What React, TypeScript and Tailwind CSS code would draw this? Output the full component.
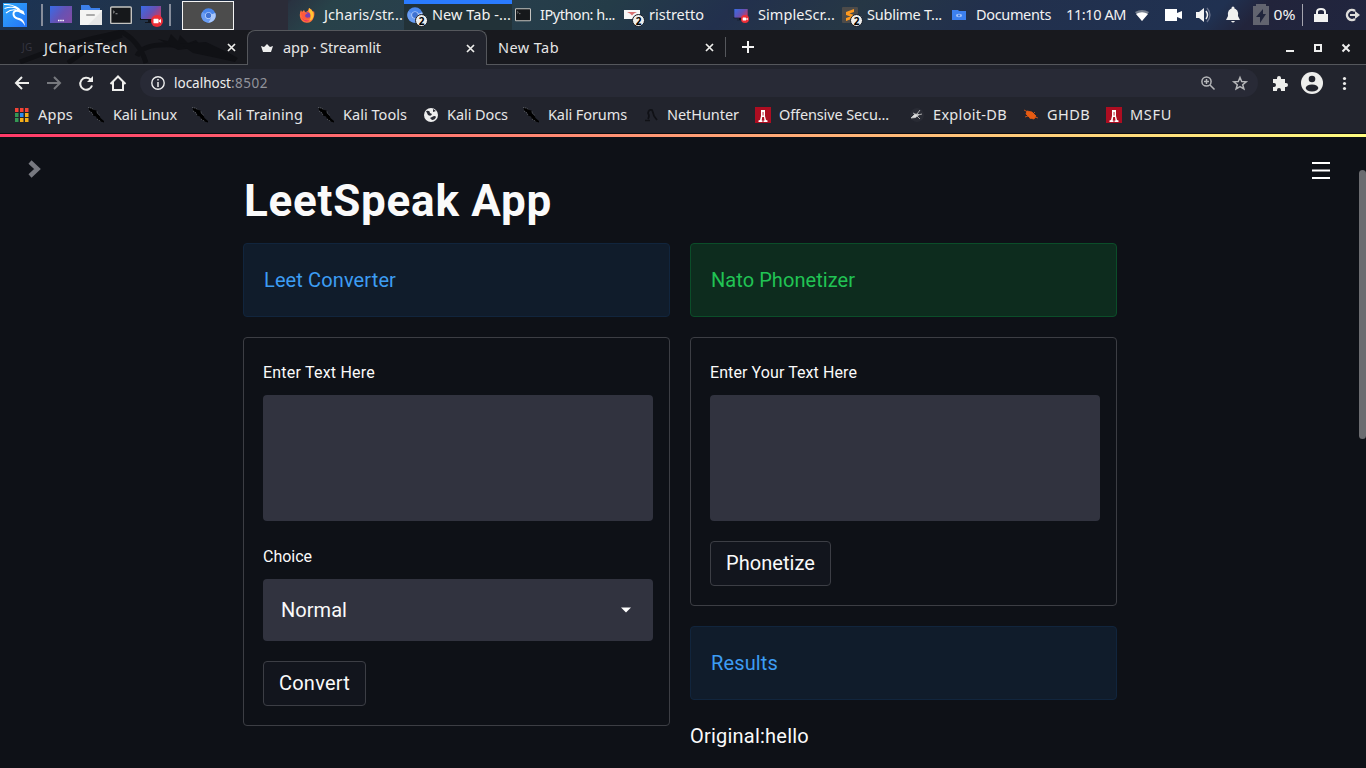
import React, { useLayoutEffect, useRef, useState } from "react";

function Fit({ w, children, className = "" }: { w: number; children: string; className?: string }) {
  const ref = useRef<HTMLSpanElement>(null);
  const [ls, setLs] = useState(0);
  useLayoutEffect(() => {
    if (ref.current) {
      const natural = ref.current.getBoundingClientRect().width;
      setLs((w - natural) / children.length);
    }
  }, []);
  return (
    <span className={"flex shrink-0 whitespace-nowrap " + className} style={{ width: w }}>
      <span ref={ref} className="whitespace-nowrap" style={{ letterSpacing: ls }}>{children}</span>
    </span>
  );
}

function KaliLogo() {
  return (
    <svg width="24" height="24" viewBox="0 0 24 24">
      <defs><linearGradient id="kl" x1="0" y1="0" x2="1" y2="1"><stop offset="0" stopColor="#2fa8f8" /><stop offset="1" stopColor="#2474fb" /></linearGradient></defs>
      <rect width="24" height="24" fill="url(#kl)" />
      <path d="M1 1.500Q9 1 14 5M1.500 5.500Q8 3 14 5.500M3 10Q8 6 13 7" fill="none" stroke="#fff" strokeWidth="1.100" />
      <path d="M11 3Q16 4 17 6.500L20.500 8 22 12 18.500 10.500 15.500 9Q11 8 11.500 11.500Q12 14 16.500 15Q21.500 16.500 22 23Q19.500 18 15.500 17Q9.500 15.500 9.500 11Q9.500 7 14 6.500z" fill="#fff" />
    </svg>
  );
}

function Monitor({ rec = false, w = 24 }: { rec?: boolean; w?: number }) {
  return (
    <svg width={w} height={w} viewBox="0 0 24 24" className="shrink-0">
      <defs><linearGradient id={rec ? "mr" : "md"} x1="0" y1="0" x2="1" y2=".6"><stop offset="0" stopColor="#386ce8" /><stop offset=".6" stopColor="#6652b4" /><stop offset="1" stopColor={rec ? "#bd3c6e" : "#7a4da8"} /></linearGradient></defs>
      {rec ? (
        <>
          <path d="M1 15h22v2h-8v2h3v1H6v-1h3v-2H1z" fill="#12141b" />
          <rect x="2" y="3" width="20" height="13" fill="url(#mr)" />
          <circle cx="18" cy="18" r="6" fill="#ed2e37" />
          <rect x="14.500" y="15.800" width="5" height="4.500" rx=".6" fill="#fff" /><path d="M19 18l3-2v4z" fill="#fff" />
        </>
      ) : (
        <><rect x="1" y="3" width="22" height="17" fill="url(#md)" /><path d="M9 17.500h6" stroke="#fff" strokeWidth="1.500" strokeDasharray="1.500 .7" /></>
      )}
    </svg>
  );
}

function Terminal({ w }: { w: number }) {
  return (
    <svg width={w} height={w * 0.84} viewBox="0 0 22 18" className="shrink-0">
      <rect x=".7" y=".7" width="20.600" height="16.600" rx="1" fill="#16181b" stroke="#c4c3c0" strokeWidth="1.400" />
      <path d="M3 4.500l1.500 1.200L3 7M5.500 7.500h2" fill="none" stroke="#aaa" strokeWidth=".9" />
    </svg>
  );
}

function Chromium({ w }: { w: number }) {
  return (
    <svg width={w} height={w} viewBox="0 0 16 16" className="shrink-0">
      <circle cx="8" cy="8" r="7.700" fill="#4b87ec" />
      <path d="M8 8L15.200 5.300A7.700 7.700 0 0 1 7.500 15.700L11 10z" fill="#a9c7fb" />
      <path d="M8 8L1.300 4.300A7.700 7.700 0 0 0 7.500 15.700L11 9.500z" fill="#6a9df3" />
      <circle cx="8" cy="8" r="3.600" fill="#c9dcff" /><circle cx="8" cy="8" r="2.900" fill="#3f72d2" />
    </svg>
  );
}

function Firefox() {
  return (
    <svg width="16" height="16" viewBox="0 0 16 16">
      <path d="M10 1q3 1 4 4l1-1q1 4-.5 7A7 7 0 0 1 1 10Q.3 6 2 3l1 2 2-2 1 2q3 0 4-4z" fill="#ff7139" />
      <path d="M10 1q5 3 4.500 8A6 6 0 0 1 10 14q3-4 1-8-2-2-1-5z" fill="#ffc533" />
      <circle cx="8" cy="8.500" r="3.200" fill="#7542b5" /><path d="M2 5q3 1 7 1Q6 7 6 9q1 3 5 1-2 4-6 2Q2 10 2 5" fill="#ff593c" />
      <path d="M2 10q4 5 10 3-6 4-10-3" fill="#ee2967" />
    </svg>
  );
}

function Badge() {
  return (
    <span className="absolute left-[8px] top-[7px] flex h-[13px] w-[13px] items-center justify-center rounded-full border border-[#161b26] bg-[#eeeeec] font-['Noto_Sans'] text-[10px] font-bold leading-none text-black">2</span>
  );
}

function Task({ icon, badge = false, label, tw, className }: { icon: React.ReactNode; badge?: boolean; label: string; tw: number; className: string }) {
  return (
    <div className={"flex h-[30px] shrink-0 items-center gap-[9px] " + className}>
      <span className="relative flex h-4 w-4 shrink-0 items-center justify-center">{icon}{badge && <Badge />}</span>
      <Fit w={tw}>{label}</Fit>
    </div>
  );
}

function Close() {
  return <svg width="9" height="9" viewBox="0 0 9 9" className="shrink-0"><path d="M1 1l7 7M8 1L1 8" stroke="#eeeeec" strokeWidth="1.700" /></svg>;
}

function KaliMark() {
  return (
    <svg width="18" height="18" viewBox="0 0 18 18" className="shrink-0 -translate-x-[2px]">
      <path d="M1.500 2l3.500.5 2 1.500 2.500.5.500 3 2.500 2 1 2.500 3.500 3v1.500l-3.500-1-3.500-2.500-1-2.500-3-1L5 6.500 2.500 5z" fill="#000" />
      <path d="M1 1.500l3.500.5 2 1.500M2 5l3 2 1 2.500M10 5.500l.5 2 2.500 2M10 13l4 2.500" fill="none" stroke="#65676c" strokeWidth=".8" strokeDasharray="1.200 1" />
    </svg>
  );
}

function RedMark() {
  return (
    <svg width="16" height="16" viewBox="0 0 16 16" className="shrink-0">
      <rect width="16" height="16" fill="#ad0d21" />
      <path d="M6 3h4v6l1 4 1.500.5V15h-4v-1.500H9.500L9 10H7.200L6.700 13.500h.8V15H3.500v-1.500l1.500-.5L6 9z" fill="#fff" />
      <path d="M7.600 5h.9v3.500h-.9z" fill="#ad0d21" />
    </svg>
  );
}

function Mark({ icon, label, tw, className }: { icon: React.ReactNode; label: string; tw: number; className: string }) {
  return <div className={"flex shrink-0 items-center " + className}><span className="flex w-[18px] shrink-0 justify-start">{icon}</span><Fit w={tw} className="ml-[6px]">{label}</Fit></div>;
}

function TaskBar() {
  return (
    <header className="flex h-[30px] w-full shrink-0 items-center overflow-hidden bg-[linear-gradient(135deg,#1b3354_0%,#22344a_12%,#1c2a43_18%,#242532_20%,#293341_21%,#284249_24%,#293f4d_32%,#243c48_44%,#22304d_53%,#263745_62%,#22304c_71%,#203151_88%,#22243b_91%,#20253f_100%)] text-[14.500px] text-[#f2f2f2]">
      <div className="flex w-[42px] shrink-0 pl-[3px]"><KaliLogo /></div>
      <div className="-ml-px h-[22px] w-[2px] shrink-0 bg-[#868d9b]" />
      <div className="ml-[6px] flex w-[24px] shrink-0 justify-center"><Monitor /></div>
      <div className="ml-[6px] shrink-0">
        <svg width="24" height="22" viewBox="0 0 24 22" className="block"><path d="M2 1h8l2 3h9v6H2z" fill="#3c80ea" /><path d="M1 6h22v15H1z" fill="#f4f4f3" /><path d="M23 7v14H9z" fill="#e6e6e6" /><rect x="7" y="10" width="9" height="2" rx="1" fill="#aaa" /></svg>
      </div>
      <div className="ml-[7px] shrink-0"><Terminal w={22} /></div>
      <div className="ml-[7px] w-[24px] shrink-0"><Monitor rec /></div>
      <div className="ml-[6px] h-[22px] w-[2px] shrink-0 bg-[#868d9b]" />
      <div className="ml-[11px] flex h-[29px] w-[52px] shrink-0 items-center justify-center border border-[#f4f4f4] bg-[#4c4c4c]"><Chromium w={15} /></div>
      <div className="h-[30px] w-[54px] shrink-0 bg-[#2b2c38]" />
      <Task icon={<Firefox />} label="Jcharis/str..." tw={79} className="w-[116px] pl-[11px]" />
      <Task icon={<Chromium w={16} />} badge label="New Tab -..." tw={79} className="w-[108px] border-t-4 border-[#2a7bff] bg-[#223238] pb-1 pl-[3px]" />
      <Task icon={<Terminal w={16} />} label="IPython: h..." tw={75} className="w-[108px] pl-[3px]" />
      <Task icon={<svg width="16" height="14" viewBox="0 0 16 14"><path d="M0 2h16v9H0z" fill="#f7f7f7" /><path d="M3 4h10l-3 1.500-2 2-2-2z" fill="#d87070" /></svg>} badge label="ristretto" tw={55} className="w-[108px] pl-[4px]" />
      <Task icon={<Monitor rec w={16} />} label="SimpleScr..." tw={77} className="w-[110px] pl-[5px]" />
      <Task icon={<svg width="16" height="16" viewBox="0 0 16 16"><rect width="16" height="16" rx="1" fill="#4d4b49" /><path d="M12 2v3L7.500 6.600 12 8v3l-8 3v-3l4.500-1.500L4 8V5z" fill="#ff9a1f" /></svg>} badge label="Sublime T..." tw={75} className="w-[110px] pl-[4px]" />
      <Task icon={<svg width="15" height="12" viewBox="0 0 15 12"><path d="M0 1h6l1 1h7v9H0z" fill="#3c80ef" /><ellipse cx="7" cy="6.500" rx="3" ry="1.700" fill="#9fc0fa" /><circle cx="7" cy="6.500" r="1" fill="#3674dc" /></svg>} label="Documents" tw={75} className="w-[117px] pl-[3px]" />
      <Fit w={60} className="ml-px">11:10 AM</Fit>
      <svg width="240" height="30" viewBox="1126 0 240 30" className="shrink-0">
        <path d="M1135 12q7-4 14 0l-7 9z" fill="#77808f" /><path d="M1136 14q6-3.500 12 0l-6 7z" fill="#fff" />
        <path d="M1165 9h12v4l5-2v8l-5-2v4h-12z" fill="#fff" />
        <path d="M1196 12h3l5-4v14l-5-4h-3z" fill="#f4f4f4" /><path d="M1206 11q3 4 0 8" stroke="#eee" strokeWidth="1.500" fill="none" /><path d="M1207 8q6 7 0 14" stroke="#68718b" strokeWidth="1.300" fill="none" />
        <path d="M1226 20l2-4q-1-7 5-8 6 1 5 8l2 4zM1231 21h4q-2 3-4 0" fill="#f0f0ef" /><circle cx="1233" cy="8" r="1.500" fill="#f0f0ef" />
        <path d="M1253 6h3V4h10v2h3v19h-16z" fill="#62646f" /><path d="M1263 9l-7 8h4v6l6-9h-3z" fill="#20253c" />
        <text x="1273.500" y="20" textLength="22" lengthAdjust="spacingAndGlyphs" fill="#f4f4f4">0%</text>
        <path d="M1302.500 4v22" stroke="#a5a5af" />
        <path d="M1314 14h14v8h-14z" fill="#f2f2f1" /><path d="M1317 15v-3q0-3 4-3t4 3v3" fill="none" stroke="#f2f2f1" strokeWidth="2" />
        <path d="M1355 11a5 5 0 1 0 0 8" fill="none" stroke="#deddda" strokeWidth="2.500" /><path d="M1350 15h6" stroke="#deddda" strokeWidth="2" /><path d="M1355 11l5 4-5 4z" fill="#deddda" />
      </svg>
    </header>
  );
}

function Tabs() {
  return (
    <div className="flex h-[35px] w-full shrink-0 items-center border-b border-[#55575c] bg-[#18191e] text-[14.500px] text-[#e6e6e6]">
      <div className="relative flex h-full w-[247px] shrink-0 items-center pl-[22px] pt-px">
        <svg width="247" height="34" className="absolute left-0 top-0" fill="none">
          <path d="M20 32Q70 12 122 2Q140 12 146 33M68 33Q95 12 122 5M137 26Q142 13 175 15L204 16" stroke="#101115" strokeWidth="5" />
          <path d="M158 9l10 2 3-7 7 7 2-6 8 8 8-3 6 7-24 3z" fill="#101115" />
          <path d="M180 14l26-2 21 10 11 6-3 4-18-4-24-5z" fill="#101115" />
        </svg>
        <span className="relative w-[22px] text-[10px] tracking-wide text-[#353541]">JG</span>
        <Fit w={84} className="relative">JCharisTech</Fit>
        <span className="relative ml-[99px]"><Close /></span>
      </div>
      <div className="-mb-px flex h-[35px] w-[240px] shrink-0 items-center rounded-t-lg border border-b-0 border-[#55575c] bg-[#22242d] pl-[13px]">
        <svg width="12" height="9" viewBox="0 0 12 9"><path d="M0 2l3 1 3-3 3 3 3-1-2 6H2z" fill="#eee" /></svg>
        <Fit w={98} className="ml-[10px]">app · Streamlit</Fit>
        <span className="ml-[85px]"><Close /></span>
      </div>
      <Fit w={61} className="ml-[11px] pt-px">New Tab</Fit>
      <span className="ml-[146px]"><Close /></span>
      <span className="ml-[11px] h-5 w-px bg-[#55575c]" />
      <svg width="12" height="12" className="ml-[16px]"><path d="M6 0v12M0 6h12" stroke="#f4f4f4" strokeWidth="2" /></svg>
      <svg width="84" height="34" viewBox="1282 30 84 34" className="ml-auto shrink-0">
        <path d="M1286 51h8" stroke="#eee" strokeWidth="2" /><rect x="1315" y="45" width="6" height="6" fill="none" stroke="#eee" strokeWidth="2" /><path d="M1342.500 44.500l7 7M1349.500 44.500l-7 7" stroke="#eee" strokeWidth="2" />
      </svg>
    </div>
  );
}

function Toolbar() {
  return (
    <div className="flex h-[36px] w-full shrink-0 items-center bg-[#22242d]">
      <svg width="140" height="36" viewBox="0 65 140 36" fill="none" stroke="#eeeeec" strokeWidth="2" className="shrink-0">
        <path d="M29 83H16M22 77l-6 6 6 6" /><path d="M47 83h13M54 77l6 6-6 6" stroke="#77797e" />
        <path d="M90.500 79.500a6 6 0 1 0 1.500 6" /><path d="M93 76v6h-6z" fill="#eeeeec" stroke="none" />
        <path d="M110.500 84l7.500-7.500 7.500 7.500M113 82v8h10v-8" />
      </svg>
      <div className="flex h-[28px] w-[1118px] shrink-0 items-center rounded-full bg-[#282a36] pl-[11px] text-[13.500px] text-[#eee]">
        <svg width="14" height="14" viewBox="0 0 14 14"><circle cx="7" cy="7" r="6.200" stroke="#eee" strokeWidth="1.400" fill="none" /><path d="M7 6v5M7 3v1.600" stroke="#eee" strokeWidth="1.500" /></svg>
        <Fit w={57} className="ml-[9px]">localhost</Fit><Fit w={37} className="text-[#91939b]">:8502</Fit>
        <svg width="60" height="28" viewBox="1198 69 60 28" className="ml-auto" fill="none" stroke="#b5b6b9" strokeWidth="1.500">
          <circle cx="1206.500" cy="81.500" r="4.600" /><path d="M1210 85l4.500 4.500M1204 81.500h5M1206.500 79v5" /><path d="M1240 77.500l1.700 4 4.500.3-3.500 2.900 1.200 4.300-3.900-2.300-3.900 2.300 1.200-4.300-3.500-2.900 4.500-.3z" />
        </svg>
      </div>
      <svg width="108" height="36" viewBox="1258 65 108 36" fill="#eeeeec" className="shrink-0">
        <path d="M1273 79h4v-1a2 2 0 0 1 4 0v1h4v4h1a2 2 0 0 1 0 4h-1v4h-4v-1a2 2 0 0 0-4 0v1h-4v-4h1a2 2 0 0 0 0-4h-1z" />
        <circle cx="1312" cy="83" r="11" /><circle cx="1312" cy="79" r="3.300" fill="#22242d" /><ellipse cx="1312" cy="88" rx="6.300" ry="3.500" fill="#22242d" />
        <circle cx="1344.500" cy="78.500" r="1.600" /><circle cx="1344.500" cy="83.500" r="1.600" /><circle cx="1344.500" cy="88.500" r="1.600" />
      </svg>
    </div>
  );
}

function AppsGrid() {
  return (
    <svg width="14" height="14" viewBox="0 0 14 14">
      {[0, 5, 10].map((x) => [0, 5, 10].map((y) => (
        <rect key={x + "-" + y} x={x} y={y} width="3.500" height="4" fill={y === 0 ? "#f44336" : x === 0 ? "#349854" : x === 5 && y === 5 ? "#2d8bf0" : "#f5ae18"} />
      )))}
    </svg>
  );
}

function Bookmarks() {
  return (
    <div className="flex h-[33px] w-full shrink-0 items-center border-b border-[#0b0c10] bg-[#22242d] pb-[4px] pl-[14px] text-[14.500px] text-[#e7e7e7]">
      <Mark icon={<span className="ml-px"><AppsGrid /></span>} label="Apps" tw={35} className="w-[75px]" />
      <Mark icon={<KaliMark />} label="Kali Linux" tw={64} className="w-[104px]" />
      <Mark icon={<KaliMark />} label="Kali Training" tw={86} className="w-[126px]" />
      <Mark icon={<KaliMark />} label="Kali Tools" tw={64} className="w-[104px]" />
      <Mark icon={<svg width="16" height="16" viewBox="0 0 16 16"><circle cx="8" cy="8" r="7" fill="#eee" /><path d="M3 4q4-1 4 2l2 1q-1 3-4 1M10 2v3l3-1M9 10q3-2 4 0-1 3-4 3l-2-2z" fill="#292b34" /></svg>} label="Kali Docs" tw={61} className="w-[101px]" />
      <Mark icon={<KaliMark />} label="Kali Forums" tw={79} className="w-[119px]" />
      <Mark icon={<svg width="16" height="16" viewBox="0 0 16 16" fill="none"><path d="M2 13.500h5M5 12q2-3 0-6 1-4 4-3 1 2 2 6l3 4" stroke="#101116" strokeWidth="1.700" /></svg>} label="NetHunter" tw={72} className="w-[112px]" />
      <Mark icon={<RedMark />} label="Offensive Secu..." tw={110} className="w-[154px]" />
      <Mark icon={<svg width="16" height="16" viewBox="0 0 16 16"><circle cx="8" cy="8" r="7" fill="#292b34" /><path d="M2 11l4-4 4 .5-3.500 3zM6 7L4 6M8 7l3-4M9 8l4-1M8 9l3 3" fill="#ddd" stroke="#ccc" strokeWidth=".8" /></svg>} label="Exploit-DB" tw={74} className="w-[114px]" />
      <Mark icon={<svg width="16" height="16" viewBox="0 0 16 16"><path d="M4 4l5 1 4 4-2 3-4-1-4-4zM1 3l4 2M2 10l3-1M7 12l1-2M12 5l-2 2M12 10l3 1" fill="#e75b12" stroke="#e75b12" strokeWidth=".8" /></svg>} label="GHDB" tw={43} className="w-[83px]" />
      <Mark icon={<RedMark />} label="MSFU" tw={42} className="" />
    </div>
  );
}

function Banner({ children, green = false, w }: { children: string; green?: boolean; w: number }) {
  return (
    <div className={"flex h-[74px] shrink-0 items-center rounded border pl-[20px] text-[20px] " + (green ? "border-[#0b4d29] bg-[#0d2c1e] text-[#21c354]" : "border-[#11253d] bg-[#101c2b] text-[#3d9df3]")}>
      <Fit w={w}>{children}</Fit>
    </div>
  );
}

function Button({ children, w }: { children: string; w: number }) {
  return <button className="flex h-[45px] w-fit items-center rounded border border-[#3c3e45] bg-[#12151d] px-[15px] pb-[2px] text-[20px] text-[#fafafa]"><Fit w={w}>{children}</Fit></button>;
}

export default function App() {
  return (
    <div className="flex h-[768px] w-[1366px] flex-col overflow-hidden bg-[#0e1117] font-['Noto_Sans',sans-serif]">
      <TaskBar />
      <Tabs />
      <Toolbar />
      <Bookmarks />
      <div className="h-[3px] shrink-0 bg-[linear-gradient(90deg,#ff3a69,#fffd80)]" />
      <main className="flex min-h-0 flex-1 font-['Roboto',sans-serif] text-[#fafafa]">
        <aside className="w-[243px] shrink-0 pl-[28px] pt-[23px]">
          <svg width="13" height="18" viewBox="0 0 13 18"><path d="M2 2l7.500 7L2 16" fill="none" stroke="#777980" strokeWidth="4.500" /></svg>
        </aside>
        <div className="w-[874px] shrink-0 pt-[34px]">
          <h1 className="flex h-[60px] items-center pl-px text-[44px] font-bold leading-none"><Fit w={308}>LeetSpeak App</Fit></h1>
          <div className="mt-[12px] grid grid-cols-2 items-start gap-5">
            <section className="flex flex-col gap-5">
              <Banner w={132}>Leet Converter</Banner>
              <form className="flex h-[389px] flex-col rounded border border-[#3c3e44] pl-[19px] pt-[23px]">
                <label className="flex h-6 items-center text-[16px]"><Fit w={112}>Enter Text Here</Fit></label>
                <textarea className="mt-[10px] h-[126px] w-[390px] shrink-0 resize-none rounded bg-[#31333f]" />
                <label className="mt-[24px] flex h-6 items-center text-[16px]"><Fit w={49}>Choice</Fit></label>
                <div className="mt-[10px] flex h-[62px] w-[390px] shrink-0 items-center justify-between rounded bg-[#31333f] pl-[18px] pr-[22px] text-[20px]"><Fit w={66}>Normal</Fit><svg width="10" height="6"><path d="M0 .5h10L5 5.500z" fill="#fff" /></svg></div>
                <div className="mt-5"><Button w={71}>Convert</Button></div>
              </form>
            </section>
            <section className="flex flex-col gap-5">
              <Banner green w={144}>Nato Phonetizer</Banner>
              <form className="flex h-[269px] flex-col rounded border border-[#3c3e44] pl-[19px] pt-[23px]">
                <label className="flex h-6 items-center text-[16px]"><Fit w={147}>Enter Your Text Here</Fit></label>
                <textarea className="mt-[10px] h-[126px] w-[390px] shrink-0 resize-none rounded bg-[#31333f]" />
                <div className="mt-5"><Button w={89}>Phonetize</Button></div>
              </form>
              <Banner w={67}>Results</Banner>
              <p className="flex h-8 items-center text-[20px]"><Fit w={119}>Original:hello</Fit></p>
            </section>
          </div>
        </div>
        <div className="flex flex-1 justify-end">
          <svg width="18" height="17" className="mt-[25px] shrink-0"><path d="M0 1h18M0 8.500h18M0 16h18" stroke="#fff" strokeWidth="2" /></svg>
          <div className="ml-[29px] mt-[33px] h-[269px] w-[7px] rounded-full bg-[#6b6c70]" />
        </div>
      </main>
    </div>
  );
}
